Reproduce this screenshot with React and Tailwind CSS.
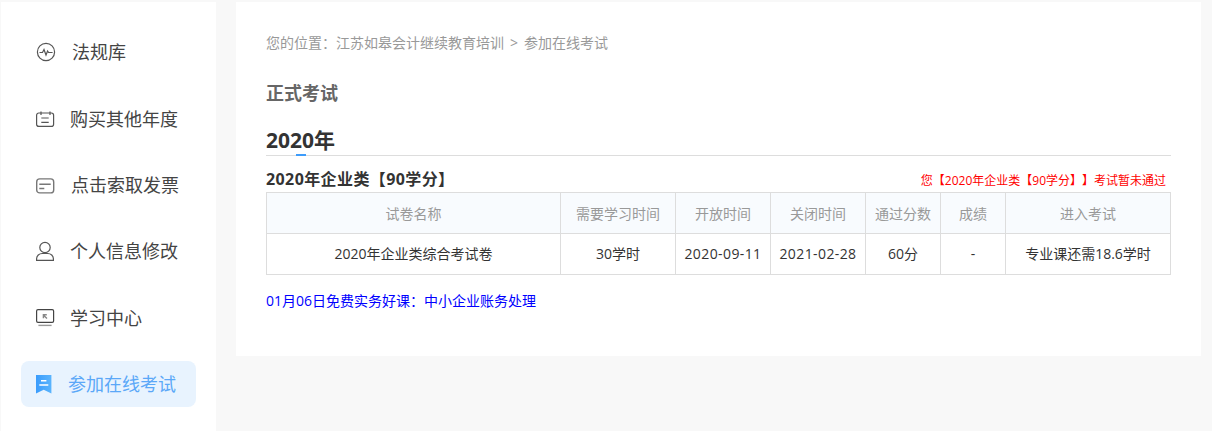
const navItems = [
  { label: '法规库', icon: 'pulse', textClass: 'ml-[16px]' },
  { label: '购买其他年度', icon: 'calendar', textClass: 'ml-[14px] translate-y-px' },
  { label: '点击索取发票', icon: 'invoice', textClass: 'ml-[15px]' },
  { label: '个人信息修改', icon: 'user', textClass: 'ml-[14px]' },
  { label: '学习中心', icon: 'monitor', textClass: 'ml-[14px]' },
];

const headers = [
  { label: '试卷名称', width: 'w-[294px]' },
  { label: '需要学习时间', width: 'w-[115px]' },
  { label: '开放时间', width: 'w-[95px]' },
  { label: '关闭时间', width: 'w-[95px]' },
  { label: '通过分数', width: 'w-[75px]' },
  { label: '成绩', width: 'w-[65px]' },
  { label: '进入考试', width: 'w-[165px]' },
];

const cells = [
  { text: '2020年企业类综合考试卷' },
  { text: '30学时' },
  { text: '2020-09-11', className: 'tracking-[0.4px]' },
  { text: '2021-02-28', className: 'tracking-[0.4px]' },
  { text: '60分' },
  { text: '-' },
  { text: '专业课还需18.6学时' },
];

function NavIcon({ name }) {
  const common = { width: 20, height: 20, viewBox: '0 0 20 20', fill: 'none', stroke: '#555', strokeWidth: 1.2 };
  if (name === 'pulse') {
    return (
      <svg {...common}>
        <circle cx="10" cy="10" r="8.6" />
        <path d="M3.5 10.5h3l1.5-3 2 5.5 1.6-4 1 1.5h4" />
      </svg>
    );
  }
  if (name === 'calendar') {
    return (
      <svg {...common}>
        <rect x="0.6" y="5" width="17" height="13.4" rx="2.2" />
        <path d="M5 3.4v3.6M14 3.4v3.6M5.3 10h7.4M5.3 14.3h7.4" />
      </svg>
    );
  }
  if (name === 'invoice') {
    return (
      <svg {...common} stroke="#777" strokeWidth="1.4">
        <rect x="0.7" y="3.9" width="17" height="14" rx="3" />
        <path d="M3.3 9.2h11.4M3.3 13.5h5" />
      </svg>
    );
  }
  if (name === 'user') {
    return (
      <svg {...common}>
        <circle cx="9" cy="6.5" r="5.2" />
        <path d="M0.6 19.4v-1.6c0-3 2.6-5.3 5.6-5.3h5.6c3 0 5.6 2.3 5.6 5.3v1.6z" />
      </svg>
    );
  }
  return (
    <svg {...common}>
      <rect x="0.6" y="1.7" width="17" height="12.7" rx="1.4" stroke="#444" />
      <path d="M2.4 17.4h13.2" stroke="#999" strokeWidth="1.4" />
      <path d="M11 10.6L7.8 7.4M7.4 10.2V6.8h3.4" stroke="#888" strokeWidth="1.4" />
    </svg>
  );
}

export default function App() {
  return (
    <div
      className="flex items-start w-[1212px] h-[431px] overflow-hidden bg-[#f8f8f8] pt-[2px] pl-px [text-spacing-trim:space-all]"
      style={{ fontFamily: '"Open Sans", "Noto Sans CJK SC", sans-serif' }}
    >
      <aside className="w-[215px] h-[429px] shrink-0 bg-white pt-[27px] pl-5 flex flex-col gap-[20.4px]">
        {navItems.map((item) => (
          <div key={item.label} className="w-[175px] h-[46px] flex items-center pl-[15px]">
            <NavIcon name={item.icon} />
            <span className={`${item.textClass} text-[18px] leading-none text-[#444]`}>{item.label}</span>
          </div>
        ))}
        <div className="w-[175px] h-[46px] flex items-center pl-[15px] rounded-lg bg-[#e8f3fe]">
          <svg width="16" height="20" viewBox="0 0 16 20">
            <defs>
              <linearGradient id="bookmark" x1="0" y1="0" x2="1" y2="0">
                <stop offset="0" stopColor="#3a9cfc" />
                <stop offset="1" stopColor="#5ab4fd" />
              </linearGradient>
            </defs>
            <path d="M0 1h15.4v18.4l-7.7-3.6L0 19.4z" fill="url(#bookmark)" />
            <path d="M5 6.8h5.4M3.3 11h9" stroke="#fff" strokeWidth="1.6" />
          </svg>
          <span className="ml-[16px] text-[18px] leading-none text-[#5ba8f8]">参加在线考试</span>
        </div>
      </aside>

      <main className="ml-5 w-[965px] h-[354px] bg-white pt-[31px] px-[30px]">
        <div className="flex items-center h-[18px] text-[14px] text-[#999]">
          <span>您的位置：</span>
          <span>江苏如皋会计继续教育培训</span>
          <span className="mx-[6px]">&gt;</span>
          <span>参加在线考试</span>
        </div>

        <h2 className="mt-[31px] h-[22px] leading-[22px] text-[18px] font-bold text-[#666]">正式考试</h2>

        <div className="relative mt-[23px] h-[29px] border-b border-[#ddd]">
          <span className="block text-[21px] leading-[27px] font-bold text-[#333]">2020年</span>
          <span className="absolute left-[30px] bottom-[-1px] w-[10px] h-[2px] bg-[#3d9cfb]" />
        </div>

        <div className="flex items-end justify-between h-[36px] pb-[2px]">
          <span className="text-[16px] leading-[22px] font-bold tracking-[0.4px] text-[#333]">2020年企业类【90学分】</span>
          <span className="mr-[5px] text-[12px] leading-[18px] text-[#f00]">您【2020年企业类【90学分】】考试暂未通过</span>
        </div>

        <table className="w-[905px] table-fixed border-collapse text-[14px] text-center">
          <thead>
            <tr className="h-[41px] bg-[#f8fbfe]">
              {headers.map((h) => (
                <th key={h.label} className={`${h.width} border border-[#ddd] font-normal text-[#999]`}>
                  {h.label}
                </th>
              ))}
            </tr>
          </thead>
          <tbody>
            <tr className="h-[41px]">
              {cells.map((c) => (
                <td key={c.text} className={`border border-[#ddd] pb-[2px] text-[#333] ${c.className || ''}`}>{c.text}</td>
              ))}
            </tr>
          </tbody>
        </table>

        <a className="block mt-[16px] text-[14px] leading-[20px] text-[#00f]">01月06日免费实务好课：中小企业账务处理</a>
      </main>
    </div>
  );
}
